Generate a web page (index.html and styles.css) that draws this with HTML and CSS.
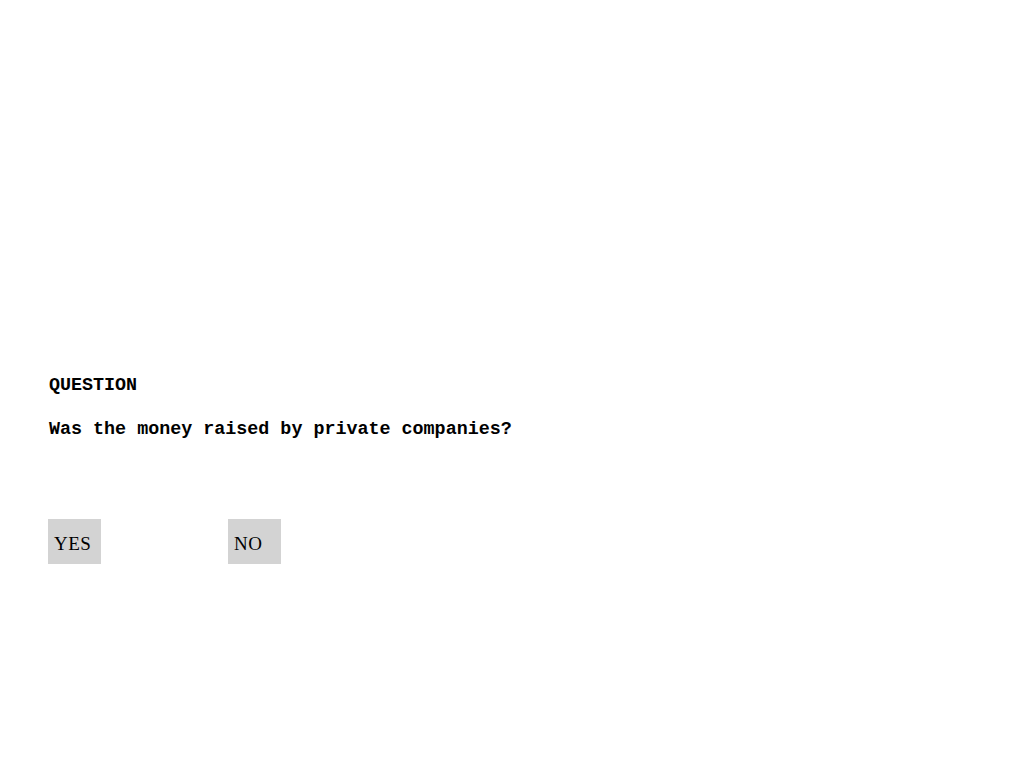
FILE: index.html
```html
<!DOCTYPE html>
<html>
<head>
<meta charset="utf-8">
<link rel="stylesheet" href="styles.css">
</head>
<body>
<main class="quiz">
  <h1 class="label">QUESTION</h1>
  <p class="question">Was the money raised by private companies?</p>
  <div class="answers">
    <button class="answer">YES</button>
    <button class="answer">NO</button>
  </div>
</main>
</body>
</html>
```

FILE: styles.css
```css
html, body {
  margin: 0;
  background: #fff;
}
.quiz {
  padding: 375px 0 0 49px;
  font-family: "Liberation Mono", monospace;
  font-weight: bold;
  font-size: 18.36px;
  line-height: 22px;
  color: #000;
}
.label {
  margin: 0;
  font-size: inherit;
  font-weight: bold;
}
.question {
  margin: 22px 0 0 0;
}
.answers {
  display: flex;
  gap: 127px;
  margin: 78px 0 0 -1px;
}
.answer {
  width: 53px;
  height: 45px;
  margin: 0;
  padding: 5px 0 0 6px;
  border: none;
  border-radius: 0;
  background: #d3d3d3;
  font-family: "Liberation Serif", serif;
  font-weight: normal;
  font-size: 19px;
  letter-spacing: 0.5px;
  color: #000;
  text-align: left;
  -webkit-font-smoothing: none;
}
```
